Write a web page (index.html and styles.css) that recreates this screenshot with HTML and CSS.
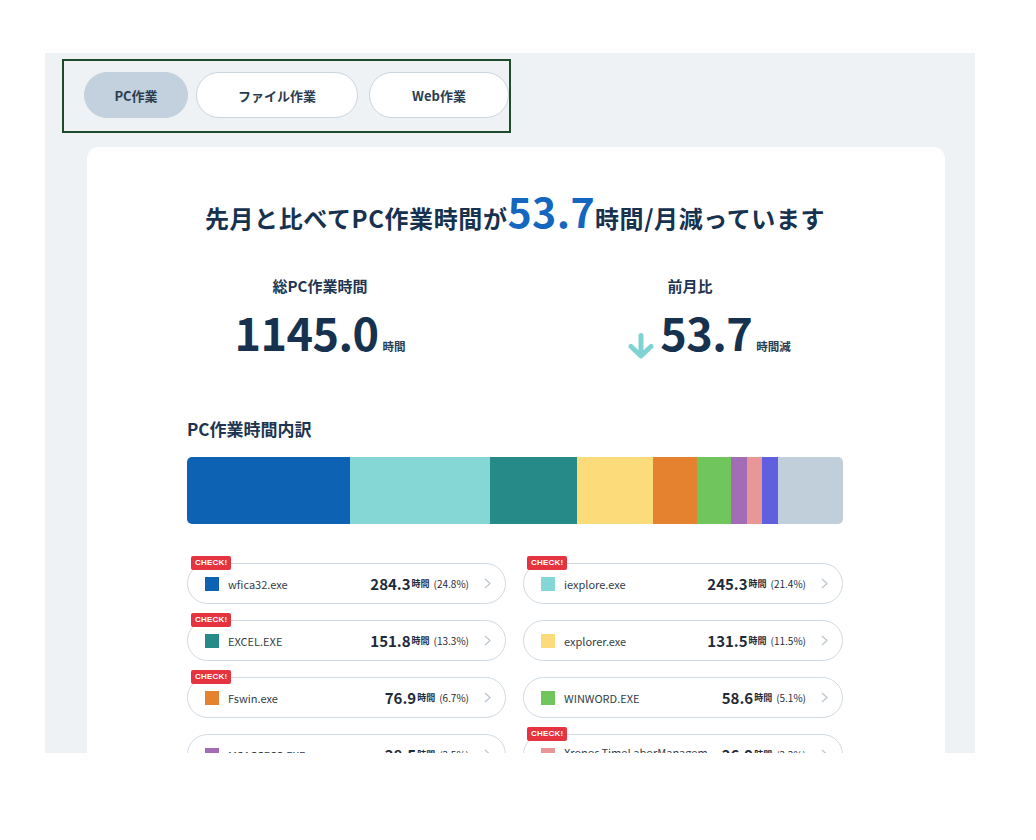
FILE: index.html
```html
<!DOCTYPE html>
<html lang="ja">
<head>
<meta charset="utf-8">
<title>PC作業</title>
<link rel="stylesheet" href="styles.css">
</head>
<body>
<div class="viewport">
  <div class="tabs">
    <button class="tab tab-active">PC作業</button>
    <button class="tab tab-file">ファイル作業</button>
    <button class="tab tab-web">Web作業</button>
  </div>

  <div class="card">
    <h1 class="headline">先月と比べてPC作業時間が<span class="hl-num">53.7</span>時間/月減っています</h1>

    <div class="stats">
      <div class="stat stat-left">
        <div class="stat-label">総PC作業時間</div>
        <div class="stat-value"><span class="big">1145.0</span><span class="unit">時間</span></div>
      </div>
      <div class="stat stat-right">
        <div class="stat-label">前月比</div>
        <div class="stat-value">
          <svg class="arrow" width="28" height="26" viewBox="0 0 28 26"><path d="M14 2.5 V22.5 M4 13.5 L14 23 L24 13.5" fill="none" stroke="#7fd4d3" stroke-width="5" stroke-linecap="round" stroke-linejoin="round"/></svg>
          <span class="big">53.7</span><span class="unit">時間減</span>
        </div>
      </div>
    </div>

    <h2 class="section-title">PC作業時間内訳</h2>

    <div class="bar">
      <div class="seg" style="width:24.8%;background:#0d62b3"></div>
      <div class="seg" style="width:21.4%;background:#84d7d5"></div>
      <div class="seg" style="width:13.3%;background:#268b88"></div>
      <div class="seg" style="width:11.6%;background:#fcdb7b"></div>
      <div class="seg" style="width:6.7%;background:#e5822f"></div>
      <div class="seg" style="width:5.2%;background:#70c55c"></div>
      <div class="seg" style="width:2.4%;background:#a36cb7"></div>
      <div class="seg" style="width:2.3%;background:#e89697"></div>
      <div class="seg" style="width:2.4%;background:#5f5fdf"></div>
      <div class="seg seg-rest" style="background:#c0cfd9"></div>
    </div>

    <div class="list">
      <div class="item"><span class="badge">CHECK!</span><span class="sq" style="background:#0d62b3"></span><span class="name">wfica32.exe</span><span class="val">284.3</span><span class="vunit">時間</span><span class="pct">(24.8%)</span><svg class="chev" width="7" height="11" viewBox="0 0 7 11"><path d="M1 1 L6 5.5 L1 10" fill="none" stroke="#bcc7d1" stroke-width="1.3"/></svg></div>
      <div class="item"><span class="badge">CHECK!</span><span class="sq" style="background:#84d7d5"></span><span class="name">iexplore.exe</span><span class="val">245.3</span><span class="vunit">時間</span><span class="pct">(21.4%)</span><svg class="chev" width="7" height="11" viewBox="0 0 7 11"><path d="M1 1 L6 5.5 L1 10" fill="none" stroke="#bcc7d1" stroke-width="1.3"/></svg></div>
      <div class="item"><span class="badge">CHECK!</span><span class="sq" style="background:#268b88"></span><span class="name">EXCEL.EXE</span><span class="val">151.8</span><span class="vunit">時間</span><span class="pct">(13.3%)</span><svg class="chev" width="7" height="11" viewBox="0 0 7 11"><path d="M1 1 L6 5.5 L1 10" fill="none" stroke="#bcc7d1" stroke-width="1.3"/></svg></div>
      <div class="item"><span class="sq" style="background:#fcdb7b"></span><span class="name">explorer.exe</span><span class="val">131.5</span><span class="vunit">時間</span><span class="pct">(11.5%)</span><svg class="chev" width="7" height="11" viewBox="0 0 7 11"><path d="M1 1 L6 5.5 L1 10" fill="none" stroke="#bcc7d1" stroke-width="1.3"/></svg></div>
      <div class="item"><span class="badge">CHECK!</span><span class="sq" style="background:#e5822f"></span><span class="name">Fswin.exe</span><span class="val">76.9</span><span class="vunit">時間</span><span class="pct">(6.7%)</span><svg class="chev" width="7" height="11" viewBox="0 0 7 11"><path d="M1 1 L6 5.5 L1 10" fill="none" stroke="#bcc7d1" stroke-width="1.3"/></svg></div>
      <div class="item"><span class="sq" style="background:#70c55c"></span><span class="name">WINWORD.EXE</span><span class="val">58.6</span><span class="vunit">時間</span><span class="pct">(5.1%)</span><svg class="chev" width="7" height="11" viewBox="0 0 7 11"><path d="M1 1 L6 5.5 L1 10" fill="none" stroke="#bcc7d1" stroke-width="1.3"/></svg></div>
      <div class="item"><span class="sq" style="background:#a36cb7"></span><span class="name">MSACCESS.EXE</span><span class="val">28.5</span><span class="vunit">時間</span><span class="pct">(2.5%)</span><svg class="chev" width="7" height="11" viewBox="0 0 7 11"><path d="M1 1 L6 5.5 L1 10" fill="none" stroke="#bcc7d1" stroke-width="1.3"/></svg></div>
      <div class="item"><span class="badge">CHECK!</span><span class="sq" style="background:#e89697"></span><span class="name name-wrap">Xronos.TimeLaborManagement.exe</span><span class="val">26.9</span><span class="vunit">時間</span><span class="pct">(2.3%)</span><svg class="chev" width="7" height="11" viewBox="0 0 7 11"><path d="M1 1 L6 5.5 L1 10" fill="none" stroke="#bcc7d1" stroke-width="1.3"/></svg></div>
    </div>
  </div>
</div>
</body>
</html>
```

FILE: styles.css
```css
* { box-sizing: border-box; }

html, body {
  margin: 0;
  padding: 0;
  background: #ffffff;
  font-family: "Noto Sans CJK JP", "Noto Sans", sans-serif;
  color: #1a3350;
}

.viewport {
  margin: 53px 0 0 45px;
  width: 930px;
  height: 700px;
  overflow: hidden;
  background: #eef2f5;
  padding: 6px 0 0 17px;
}

.tabs {
  display: inline-flex;
  gap: 8px;
  border: 2px solid #1f4a2c;
  padding: 11px 0 13px 20px;
  width: 449px;
}

.tab {
  height: 46px;
  border-radius: 23px;
  border: 1.5px solid #c9d5df;
  background: #ffffff;
  font-family: "Noto Sans CJK JP", sans-serif;
  font-weight: 700;
  font-size: 13px;
  color: #2a3c4f;
  padding: 0;
  flex: none;
}

.tab-active {
  width: 104px;
  background: #c2d1dd;
  border-color: #c2d1dd;
}

.tab-file { width: 162px; }
.tab-web { width: 140px; margin-left: 3px; }

.card {
  margin: 14px 0 0 25px;
  width: 858px;
  height: 640px;
  background: #ffffff;
  border-radius: 12px;
  padding: 39px 102px 0 100px;
}

.headline {
  margin: 0;
  text-align: center;
  font-size: 24px;
  font-weight: 700;
  line-height: 48px;
  color: #17324f;
  letter-spacing: 0.6px;
}

.hl-num {
  font-size: 41px;
  color: #1566bf;
  letter-spacing: 0.4px;
}

.stats {
  display: grid;
  grid-template-columns: 200px 200px;
  column-gap: 170px;
  justify-content: start;
  margin-top: 34px;
  padding-left: 33px;
}

.stat {
  display: flex;
  flex-direction: column;
  align-items: center;
}

.stat-label {
  font-size: 15px;
  font-weight: 700;
  line-height: 20px;
  color: #1f3550;
}

.stat-value {
  display: flex;
  align-items: baseline;
  margin-top: 10px;
  line-height: 52px;
  white-space: nowrap;
}

.stat-right .stat-value { margin-left: 38px; }

.big {
  font-size: 45px;
  font-weight: 700;
  color: #16324f;
  letter-spacing: -0.6px;
}

.unit {
  font-size: 11.5px;
  font-weight: 700;
  color: #2a3c4f;
  margin-left: 4px;
}

.arrow {
  align-self: center;
  margin-right: 5px;
  margin-top: 14px;
  flex: none;
}

.section-title {
  margin: 45px 0 0 0;
  font-size: 17px;
  font-weight: 700;
  line-height: 24px;
  color: #1d3550;
}

.bar {
  display: flex;
  margin-top: 16px;
  height: 67px;
  border-radius: 5px;
  overflow: hidden;
}

.seg { height: 100%; }
.seg-rest { flex: 1; }

.list {
  display: grid;
  grid-template-columns: 319px 320px;
  column-gap: 17px;
  row-gap: 16px;
  margin-top: 39px;
}

.item {
  position: relative;
  display: flex;
  align-items: center;
  height: 41px;
  border: 1.5px solid #cfdae3;
  border-radius: 21px;
  padding: 0 14px 0 17px;
  background: #ffffff;
}

.badge {
  position: absolute;
  left: 3px;
  top: -8px;
  background: #e5333f;
  color: #ffffff;
  font-family: "Liberation Sans", "Noto Sans", sans-serif;
  font-weight: 700;
  font-size: 8px;
  line-height: 14px;
  height: 14px;
  padding: 0 4px;
  border-radius: 2px;
  letter-spacing: 0.2px;
}

.sq {
  width: 14px;
  height: 14px;
  flex: none;
}

.name {
  margin-left: 9px;
  font-size: 11px;
  color: #333d47;
  white-space: nowrap;
}

.name-wrap {
  white-space: normal;
  width: 147px;
  word-break: break-all;
  line-height: 14px;
  margin-top: 8px;
}

.val {
  margin-left: auto;
  font-size: 15px;
  font-weight: 700;
  color: #1f2b38;
}

.vunit {
  font-size: 9px;
  font-weight: 700;
  color: #1f2b38;
  margin-left: 1px;
}

.pct {
  font-size: 10px;
  color: #1f2b38;
  margin-left: 4px;
}

.chev {
  margin-left: 15px;
  flex: none;
}
```
